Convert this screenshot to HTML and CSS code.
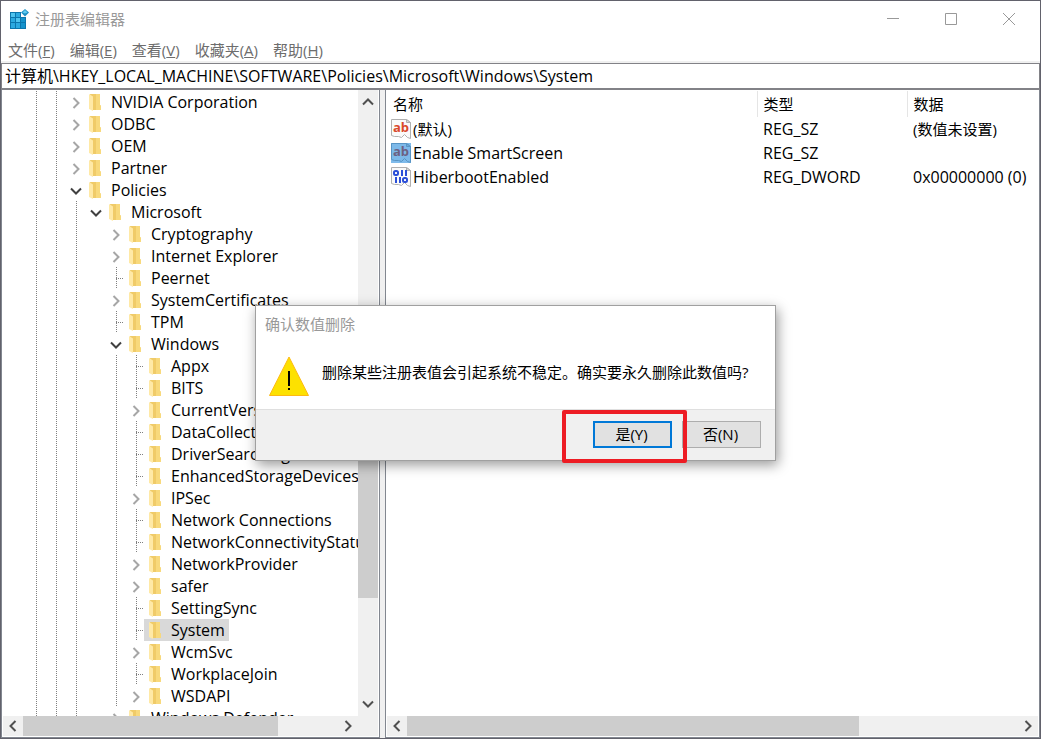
FILE: index.html
```html
<!DOCTYPE html>
<html lang="zh-CN">

<head>
    <meta charset="UTF-8">
    <meta name="viewport" content="width=device-width, initial-scale=1.0">
    <title>注册表编辑器</title>
    <link rel="stylesheet" href="styles.css">
</head>

<body>

    <!-- shared icons -->
    <svg class="defs" aria-hidden="true">
        <defs>
            <symbol id="folder" viewBox="0 0 13 17">
                <path fill="#f0cb68" d="M1 0h10v11l1 1v4H3z" />
                <path fill="#f8d97c" d="M7 0h4v11l1 1v4H7z" />
                <path fill="#ffe9a6" d="M0 0l4 2.500V17l-4-2z" />
            </symbol>
            <symbol id="chevron" viewBox="0 0 12 12">
                <path fill="none" stroke="currentColor" stroke-width="2" d="M3.5 1l5 5-5 5" />
            </symbol>
            <symbol id="page" viewBox="0 0 20 20">
                <path fill="#fafafa" stroke="#b0b0b0" d="M.5 .5h15l4 3v16l-3-1-3-3-3 3-3-1-4 0-3-1z" />
                <path fill="#dcdcdc" stroke="#b0b0b0" d="M15.500 .5v3h4z" />
            </symbol>
        </defs>
    </svg>

    <div class="window">
        <header class="titlebar">
            <svg class="app-icon" viewBox="0 0 20 20">
                <path fill="#0b76ad" d="M1 3h11v5h5v12H1z" />
                <path fill="#2ba9e0" d="M2 4h4v4H2zM7 4h4v4H7zM2 9h4v4H2zM7 9h4v4H7zM2 14h4v5H2zM7 14h4v5H7z" />
                <path fill="#1593cc" d="M12 9h4v4h-4zM12 14h4v5h-4z" />
                <path fill="#4ec3ee" d="M2 4h4v4H2zM7 9h4v4H7z" />
                <path fill="#1c8fc4" d="M16 0l4 3.500-4 4-4-4z" />
                <path fill="#5fcbf0" d="M16 1l2.500 2.500L16 4.500l-2.500-1z" />
            </svg>
            <span class="title">注册表编辑器</span>
            <div class="controls">
                <button type="button" aria-label="最小化">
                    <svg viewBox="0 0 12 12"><path d="M0 5.500h12" /></svg>
                </button>
                <button type="button" aria-label="最大化">
                    <svg viewBox="0 0 12 12"><path d="M.5 .5h11v11H.5z" /></svg>
                </button>
                <button type="button" aria-label="关闭">
                    <svg viewBox="0 0 12 12"><path d="M0 0l12 12M12 0L0 12" /></svg>
                </button>
            </div>
        </header>

        <nav class="menu">
            <button type="button">文件(<u>F</u>)</button>
            <button type="button">编辑(<u>E</u>)</button>
            <button type="button">查看(<u>V</u>)</button>
            <button type="button">收藏夹(<u>A</u>)</button>
            <button type="button">帮助(<u>H</u>)</button>
        </nav>

        <input class="address" type="text" aria-label="地址" value="计算机\HKEY_LOCAL_MACHINE\SOFTWARE\Policies\Microsoft\Windows\System">

        <main class="panes">
            <section class="tree-pane">
                <div class="tree-body">
                    <div class="tree" id="tree">
                        <!-- rows are added by script.js -->
                    </div>
                    <div class="vscroll">
                        <svg class="arrow up"><use href="#chevron" /></svg>
                        <div class="vthumb"></div>
                        <svg class="arrow down"><use href="#chevron" /></svg>
                    </div>
                </div>
                <div class="hscroll tree-hscroll">
                    <svg class="arrow left"><use href="#chevron" /></svg>
                    <div class="track">
                        <div class="hthumb tree-thumb"></div>
                    </div>
                    <svg class="arrow"><use href="#chevron" /></svg>
                </div>
            </section>

            <section class="list-pane">
                <div class="list-body">
                    <table class="values">
                        <thead>
                            <tr>
                                <th class="col-name">名称</th>
                                <th class="col-type">类型</th>
                                <th>数据</th>
                            </tr>
                        </thead>
                        <tbody>
                            <tr>
                                <td>
                                    <div class="name zh">
                                        <span class="value-icon"><svg><use href="#page" /></svg><b>ab</b></span>
                                        (默认)
                                    </div>
                                </td>
                                <td>REG_SZ</td>
                                <td class="zh">(数值未设置)</td>
                            </tr>
                            <tr>
                                <td>
                                    <div class="name">
                                        <span class="value-icon selected"><svg><use href="#page" /></svg><b>ab</b></span>
                                        Enable SmartScreen
                                    </div>
                                </td>
                                <td>REG_SZ</td>
                                <td></td>
                            </tr>
                            <tr>
                                <td>
                                    <div class="name">
                                        <span class="value-icon">
                                            <svg viewBox="0 0 20 20">
                                                <use href="#page" />
                                                <g fill="none" stroke="#2b4fd8" stroke-width="2">
                                                    <rect x="3" y="4" width="4" height="4" rx="1.500" />
                                                    <path d="M11 3v6M15 3v6M5 10v6M9 10v6" />
                                                    <rect x="12" y="11" width="4" height="4" rx="1.500" />
                                                </g>
                                            </svg>
                                        </span>
                                        HiberbootEnabled
                                    </div>
                                </td>
                                <td>REG_DWORD</td>
                                <td>0x00000000 (0)</td>
                            </tr>
                        </tbody>
                    </table>
                </div>
                <div class="hscroll">
                    <svg class="arrow left"><use href="#chevron" /></svg>
                    <div class="track">
                        <div class="hthumb list-thumb"></div>
                    </div>
                    <svg class="arrow"><use href="#chevron" /></svg>
                </div>
            </section>
        </main>

        <div class="dialog" role="dialog" aria-labelledby="dialogTitle">
            <div class="dialog-title" id="dialogTitle">确认数值删除</div>
            <div class="dialog-body">
                <svg class="warning" viewBox="0 0 40 40">
                    <path fill="#fde100" stroke="#fdb913" d="M20 1L39.500 39.500H.5z" />
                    <path fill="#000" d="M19 15h2v15h-2zM19 32h2v2h-2z" />
                </svg>
                <p>删除某些注册表值会引起系统不稳定。确实要永久删除此数值吗?</p>
            </div>
            <div class="dialog-footer">
                <button type="button" class="default">是(Y)</button>
                <button type="button">否(N)</button>
                <div class="highlight"></div>
            </div>
        </div>
    </div>

    <script src="script.js"></script>
</body>

</html>
```
FILE: styles.css
```css
* {
    box-sizing: border-box;
}

body {
    margin: 0;
    height: 100vh;
    padding: 1px;
    background-color: #62626c;
    font: 15px/20px "Open Sans", "Noto Sans CJK SC", sans-serif;
    color: #000;
}

button,
input {
    font: inherit;
    color: inherit;
}

.defs {
    display: none;
}

.window {
    position: relative;
    display: flex;
    flex-direction: column;
    height: 100%;
    background-color: #fff;
    overflow: hidden;
}

/* title bar and menu */
.titlebar {
    display: flex;
    align-items: center;
    height: 37px;
    padding: 0 0 1px 8px;
    color: #999;
}

.app-icon {
    width: 20px;
    height: 20px;
    margin-right: 6px;
}

.controls {
    display: flex;
    align-self: stretch;
    margin-left: auto;
    padding-right: 2px;
}

.controls button {
    display: flex;
    align-items: center;
    justify-content: center;
    width: 58px;
    padding: 0;
    border: 0;
    background: none;
}

.controls svg {
    width: 12px;
    height: 12px;
    fill: none;
    stroke: #999;
}

.menu {
    display: flex;
    gap: 1px;
    height: 25px;
    border-bottom: 2px solid #f0f0f0;
}

.menu button {
    padding: 0 7px;
    border: 0;
    background: none;
    color: #6d6d6d;
}

.address {
    width: 100%;
    height: 27px;
    padding: 0 3px 2px;
    border: 1px solid #828287;
    border-bottom-width: 2px;
    border-radius: 0;
    background-color: #fff;
    font-size: 16px;
    outline: none;
}

/* panes */
.panes {
    flex: 1;
    display: flex;
    gap: 5px;
    min-height: 0;
    background-color: #f0f0f0;
}

.tree-pane,
.list-pane {
    display: flex;
    flex-direction: column;
    background-color: #fff;
    border: 1px solid #828790;
    border-top: 0;
    padding: 0 1px 1px;
}

.tree-pane {
    flex: none;
    width: 379px;
}

.list-pane {
    flex: 1;
    min-width: 0;
}

.tree-body {
    flex: 1;
    display: flex;
    min-height: 0;
}

.tree {
    flex: 1;
    min-width: 0;
    padding: 1px 0 0 21px;
    overflow: hidden;
}

.row {
    display: flex;
    height: 22px;
    font-size: 16px;
    line-height: 22px;
    white-space: nowrap;
}

.guide {
    flex: none;
    display: flex;
    align-items: center;
    justify-content: center;
    width: 20px;
}

.line,
.leaf {
    background: repeating-linear-gradient(#808080 0 1px, transparent 1px 2px) 12px 0 / 1px 100% no-repeat;
}

.leaf {
    background:
        repeating-linear-gradient(#808080 0 1px, transparent 1px 2px) 12px 0 / 1px 100% no-repeat,
        repeating-linear-gradient(90deg, #808080 0 1px, transparent 1px 2px) 12px 11px / 8px 1px no-repeat;
}

.toggle {
    padding-left: 4px;
}

.toggle svg {
    width: 12px;
    height: 12px;
    margin-top: 1px;
    color: #a6a6a6;
}

.toggle.open svg {
    color: #404040;
    transform: rotate(90deg);
}

.item {
    flex: none;
    display: flex;
    gap: 9px;
    padding: 0 4px 0 5px;
}

.item svg {
    width: 13px;
    height: 17px;
    margin-top: 3px;
}

.item.selected {
    background-color: #d9d9d9;
}

/* scroll bars */
.vscroll {
    flex: none;
    display: flex;
    flex-direction: column;
    width: 20px;
    padding: 2px 0;
    background-color: #f0f0f0;
}

.hscroll {
    display: flex;
    height: 20px;
    background-color: #f0f0f0;
}

.tree-hscroll {
    padding-right: 20px;
}

.arrow {
    flex: none;
    width: 20px;
    height: 20px;
    padding: 4px;
    color: #505050;
}

.arrow.left {
    transform: rotate(180deg);
}

.arrow.up {
    transform: rotate(-90deg);
}

.arrow.down {
    transform: rotate(90deg);
}

.vthumb {
    flex: none;
    height: 144px;
    margin: 342px 0 auto;
    background-color: #cdcdcd;
}

.track {
    flex: 1;
    display: flex;
}

.hthumb {
    background-color: #cdcdcd;
}

.tree-thumb {
    width: 81%;
}

.list-thumb {
    width: 74%;
}

/* values list */
.list-body {
    flex: 1;
    min-height: 0;
    overflow: hidden;
}

.values {
    width: 100%;
    margin-top: 1px;
    border-collapse: collapse;
    table-layout: fixed;
}

.values th,
.values td {
    height: 24px;
    padding: 0 6px;
    text-align: left;
    font-weight: normal;
    white-space: nowrap;
}

.values td {
    font-size: 16px;
}

.values .zh {
    font-size: 15px;
}

.values th {
    height: 26px;
    border-right: 1px solid #e5e5e5;
}

.values th:last-child {
    border-right: 0;
}

.values .col-name {
    width: 370px;
}

.values .col-type {
    width: 150px;
}

.name {
    display: flex;
    align-items: center;
    gap: 2px;
    margin-left: -2px;
}

.value-icon {
    position: relative;
    width: 20px;
    height: 20px;
}

.value-icon svg {
    display: block;
    width: 20px;
    height: 20px;
}

.value-icon b {
    position: absolute;
    left: 0;
    top: 0;
    width: 100%;
    text-align: center;
    font-size: 13px;
    line-height: 16px;
    color: #d9482b;
}

.value-icon.selected::after {
    content: "";
    position: absolute;
    inset: 0;
    background-color: rgba(0, 120, 215, 0.5);
}

/* confirm dialog */
.dialog {
    position: absolute;
    left: 254px;
    top: 304px;
    width: 521px;
    border: 1px solid #a0a0a0;
    background-color: #fff;
    box-shadow: 2px 4px 12px rgba(0, 0, 0, 0.4);
}

.dialog-title {
    padding: 8px 9px;
    color: #999;
}

.dialog-body {
    display: flex;
    gap: 13px;
    height: 67px;
    padding: 14px 13px 0;
}

.dialog-body p {
    margin: 6px 0 0;
}

.warning {
    width: 40px;
    height: 40px;
}

.dialog-footer {
    position: relative;
    display: flex;
    justify-content: flex-end;
    gap: 10px;
    padding: 11px 14px 12px;
    border-top: 1px solid #dfdfdf;
    background-color: #f0f0f0;
}

.dialog-footer button {
    width: 79px;
    height: 27px;
    padding: 0 2px 2px 0;
    border: 1px solid #adadad;
    background-color: #e1e1e1;
}

.dialog-footer .default {
    border: 2px solid #0078d7;
}

.highlight {
    position: absolute;
    right: 88px;
    top: 0;
    width: 125px;
    height: 53px;
    border: 4px solid #ed1c24;
    border-radius: 2px;
}
```
FILE: script.js
```js
// guides: "|" line, " " blank. state: "+" closed, "-" open, "." no children
const rows = [
    ["||", "+", "NVIDIA Corporation"],
    ["||", "+", "ODBC"],
    ["||", "+", "OEM"],
    ["||", "+", "Partner"],
    ["||", "-", "Policies"],
    ["|||", "-", "Microsoft"],
    ["||| ", "+", "Cryptography"],
    ["||| ", "+", "Internet Explorer"],
    ["||| ", ".", "Peernet"],
    ["||| ", "+", "SystemCertificates"],
    ["||| ", ".", "TPM"],
    ["||| ", "-", "Windows"],
    ["||| |", ".", "Appx"],
    ["||| |", ".", "BITS"],
    ["||| |", "+", "CurrentVersion"],
    ["||| |", ".", "DataCollection"],
    ["||| |", ".", "DriverSearching"],
    ["||| |", ".", "EnhancedStorageDevices"],
    ["||| |", "+", "IPSec"],
    ["||| |", ".", "Network Connections"],
    ["||| |", ".", "NetworkConnectivityStatusIndicator"],
    ["||| |", "+", "NetworkProvider"],
    ["||| |", "+", "safer"],
    ["||| |", ".", "SettingSync"],
    ["||| |", ".", "System"],
    ["||| |", "+", "WcmSvc"],
    ["||| |", ".", "WorkplaceJoin"],
    ["||| |", "+", "WSDAPI"],
    ["||| ", "+", "Windows Defender"]
];

const chevron = `<svg><use href="#chevron" /></svg>`;
const toggles = {
    "+": `<span class="guide toggle">${chevron}</span>`,
    "-": `<span class="guide toggle open">${chevron}</span>`,
    ".": `<span class="guide leaf"></span>`
};

const tree = document.getElementById("tree");
for (const [guides, state, label] of rows) {
    const row = document.createElement("div");
    row.className = "row";
    let html = "";
    for (const g of guides) {
        html += `<span class="guide ${g === "|" ? "line" : ""}"></span>`;
    }
    html += toggles[state];
    html += `<span class="item ${label === "System" ? "selected" : ""}"><svg><use href="#folder" /></svg>${label}</span>`;
    row.innerHTML = html;
    tree.appendChild(row);
}
```
